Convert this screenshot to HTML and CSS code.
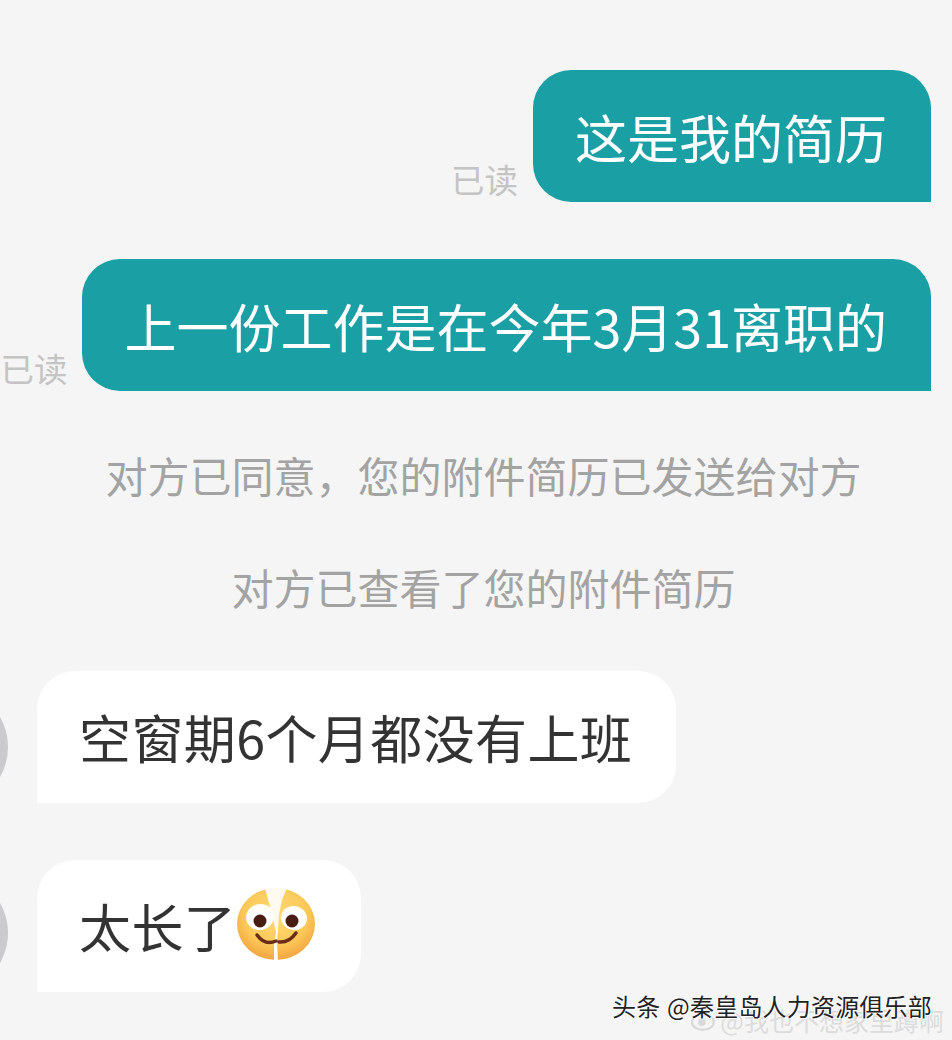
FILE: index.html
```html
<!DOCTYPE html>
<html lang="zh">
<head>
    <meta charset="UTF-8">
    <title>聊天记录</title>
    <link rel="stylesheet" href="styles.css">
</head>
<body>
    <div class="chat">
        <div class="row row-out">
            <span class="read">已读</span>
            <div class="bubble bubble-out">这是我的简历</div>
        </div>
        <div class="row row-out">
            <span class="read">已读</span>
            <div class="bubble bubble-out">上一份工作是在今年3月31离职的</div>
        </div>
        <div class="notices">
            <p class="notice">对方已同意，您的附件简历已发送给对方</p>
            <p class="notice">对方已查看了您的附件简历</p>
        </div>
        <div class="row row-in">
            <div class="avatar"></div>
            <div class="bubble bubble-in">空窗期6个月都没有上班</div>
        </div>
        <div class="row row-in">
            <div class="avatar avatar-last"></div>
            <div class="bubble bubble-in">太长了<svg class="emoji" viewBox="0 0 82 74">
                <defs>
                    <radialGradient id="face" cx="50%" cy="38%" r="62%">
                        <stop offset="0%" stop-color="#fedb74"/>
                        <stop offset="65%" stop-color="#fbc95a"/>
                        <stop offset="100%" stop-color="#f2a540"/>
                    </radialGradient>
                </defs>
                <ellipse cx="41" cy="36" rx="39" ry="36" fill="url(#face)"/>
                <path d="M30 0 L52 0 L47 12 L44 26 L43 42 L42 54 L43 72 L39 72 L39 56 L41 44 L37 26 Z" fill="#fffaf0"/>
                <ellipse cx="25" cy="29" rx="14" ry="13" fill="#fff" transform="rotate(-15 25 29)"/>
                <ellipse cx="59" cy="30" rx="13" ry="12" fill="#fff" transform="rotate(15 59 30)"/>
                <circle cx="25" cy="33" r="6.5" fill="#4a1d14"/>
                <circle cx="57" cy="33" r="6.5" fill="#4a1d14"/>
                <path d="M22 47 Q30 58 41 53" fill="none" stroke="#6b2c14" stroke-width="3.5" stroke-linecap="round"/>
                <path d="M44 54 Q54 55 61 45" fill="none" stroke="#6b2c14" stroke-width="3.5" stroke-linecap="round"/>
            </svg></div>
        </div>
    </div>
    <div class="watermark">
        <div class="mark-back">
            <svg class="mark-logo" viewBox="0 0 24 20">
                <ellipse cx="11" cy="12" rx="10" ry="7" fill="none" stroke="#d9d9d9" stroke-width="2"/>
                <circle cx="10" cy="12" r="3.5" fill="#d9d9d9"/>
            </svg>
            <span>@我也不想家里蹲啊</span>
        </div>
        <div class="mark-front">头条 @秦皇岛人力资源俱乐部</div>
    </div>
</body>
</html>
```

FILE: styles.css
```css
body {
    margin: 0;
    height: 1040px;
    overflow: hidden;
    position: relative;
    background-color: #f5f5f5;
    font-family: "Noto Sans CJK SC", "Noto Sans", sans-serif;
}
.chat {
    padding-top: 70px;
}
.row {
    display: flex;
    margin-bottom: 57px;
}
.row-out {
    justify-content: flex-end;
    align-items: flex-end;
    padding-right: 21px;
}
.row-in {
    padding-left: 8px;
}
.bubble {
    display: flex;
    align-items: center;
    box-sizing: border-box;
    height: 132px;
    padding: 0 44px 0 42px;
    font-size: 52px;
    white-space: nowrap;
}
.bubble-out {
    background-color: #1a9fa5;
    color: #fff;
    border-radius: 38px 38px 0 38px;
}
.bubble-in {
    padding-bottom: 2px;
    letter-spacing: 0.4px;
    background-color: #fff;
    color: #333;
    border-radius: 38px 38px 38px 0;
}
.read {
    flex: none;
    margin: 0 15px 3px 0;
    font-size: 33.5px;
    line-height: 40px;
    white-space: nowrap;
    color: #c4c4c4;
}
.notices {
    margin-bottom: 57px;
}
.notice {
    margin: 0 0 58px;
    height: 54px;
    line-height: 54px;
    font-size: 42px;
    text-align: center;
    color: #a3a3a3;
    padding-left: 15px;
}
.notice:last-child {
    margin-bottom: 0;
}
.avatar {
    flex: none;
    width: 120px;
    height: 120px;
    margin: 0 29px -4px -120px;
    align-self: flex-end;
    border-radius: 50%;
    background-color: #cbcbcd;
}
.avatar-last {
    margin-bottom: -1px;
}
.emoji {
    flex: none;
    width: 82px;
    height: 74px;
    margin-left: -1px;
}
.watermark {
    position: absolute;
    left: 0;
    right: 0;
    top: 0;
    bottom: 0;
    pointer-events: none;
}
.mark-front {
    position: absolute;
    top: 988px;
    right: 20px;
    font-size: 24px;
    line-height: 36px;
    letter-spacing: 0.2px;
    word-spacing: 1px;
    white-space: nowrap;
    color: #222;
    text-shadow: 1px 1px 0 #fff, -1px 0 0 #fff;
}
.mark-back {
    position: absolute;
    top: 1003px;
    right: 8px;
    display: flex;
    align-items: center;
    gap: 3px;
    font-size: 25px;
    line-height: 34px;
    white-space: nowrap;
    color: #dcdcdc;
}
.mark-logo {
    width: 26px;
    height: 22px;
}
```
